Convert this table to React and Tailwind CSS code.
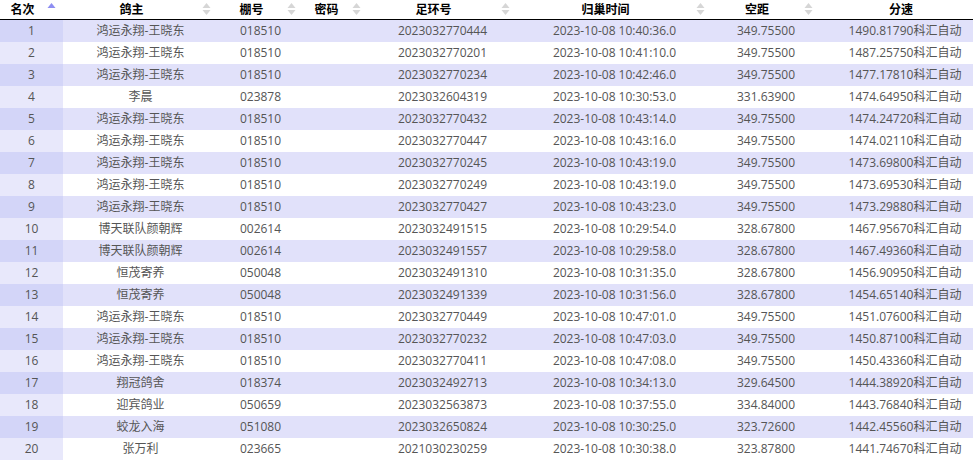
const W = '鸿运永翔-王晓东';
const B = '博天联队颜朝辉';
const H = '恒茂寄养';

const rows = [
  [W, '018510', '2023032770444', '10:40:36.0', '349.75500', '1490.81790'],
  [W, '018510', '2023032770201', '10:41:10.0', '349.75500', '1487.25750'],
  [W, '018510', '2023032770234', '10:42:46.0', '349.75500', '1477.17810'],
  ['李晨', '023878', '2023032604319', '10:30:53.0', '331.63900', '1474.64950'],
  [W, '018510', '2023032770432', '10:43:14.0', '349.75500', '1474.24720'],
  [W, '018510', '2023032770447', '10:43:16.0', '349.75500', '1474.02110'],
  [W, '018510', '2023032770245', '10:43:19.0', '349.75500', '1473.69800'],
  [W, '018510', '2023032770249', '10:43:19.0', '349.75500', '1473.69530'],
  [W, '018510', '2023032770427', '10:43:23.0', '349.75500', '1473.29880'],
  [B, '002614', '2023032491515', '10:29:54.0', '328.67800', '1467.95670'],
  [B, '002614', '2023032491557', '10:29:58.0', '328.67800', '1467.49360'],
  [H, '050048', '2023032491310', '10:31:35.0', '328.67800', '1456.90950'],
  [H, '050048', '2023032491339', '10:31:56.0', '328.67800', '1454.65140'],
  [W, '018510', '2023032770449', '10:47:01.0', '349.75500', '1451.07600'],
  [W, '018510', '2023032770232', '10:47:03.0', '349.75500', '1450.87100'],
  [W, '018510', '2023032770411', '10:47:08.0', '349.75500', '1450.43360'],
  ['翔冠鸽舍', '018374', '2023032492713', '10:34:13.0', '329.64500', '1444.38920'],
  ['迎宾鸽业', '050659', '2023032563873', '10:37:55.0', '334.84000', '1443.76840'],
  ['蛟龙入海', '051080', '2023032650824', '10:30:25.0', '323.72600', '1442.45560'],
  ['张万利', '023665', '2021030230259', '10:30:38.0', '323.87800', '1441.74670'],
];

const cols = [
  { title: '名次', w: 'w-[63px]', sort: 'asc' },
  { title: '鸽主', w: 'w-[155px]', sort: 'none' },
  { title: '棚号', w: 'w-[85px]', sort: 'none' },
  { title: '密码', w: 'w-[65px]', sort: 'none' },
  { title: '足环号', w: 'w-[149px]', sort: 'none' },
  { title: '归巢时间', w: 'w-[195px]', sort: 'none' },
  { title: '空距', w: 'w-[108px]', sort: 'none' },
  { title: '分速', w: 'w-[170px]' },
];

function SortIcon({ state }) {
  const up = state === 'asc' ? '#8e8ef2' : '#d6d6d6';
  const down = state === 'asc' ? 'transparent' : '#d6d6d6';
  return (
    <svg width="9" height="14" viewBox="0 0 9 14" className="absolute right-[7px] top-[2px]">
      <path d="M4.5 1 L8.5 6 L0.5 6 Z" fill={up} />
      <path d="M4.5 13 L8.5 8 L0.5 8 Z" fill={down} />
    </svg>
  );
}

export default function App() {
  return (
    <div
      className="w-[973px] h-[460px] overflow-hidden bg-white text-[12px]"
      style={{ fontFamily: '"Open Sans", "Noto Sans CJK SC", sans-serif' }}
    >
      <div className="w-[990px]">
        <div className="flex h-[20px] border-b border-black bg-white">
          {cols.map((c) => (
            <div key={c.title} className={`relative shrink-0 ${c.w} h-full`}>
              <div
                className={`h-full flex items-center justify-center font-bold text-black leading-none ${
                  c.sort ? 'pr-[18px]' : 'pr-[8px]'
                }`}
              >
                {c.title}
              </div>
              {c.sort && <SortIcon state={c.sort} />}
            </div>
          ))}
        </div>
        {rows.map((r, i) => {
          const odd = i % 2 === 0;
          const cells = [r[0], r[1], '', r[2], `2023-10-08 ${r[3]}`, r[4], `${r[5]}科汇自动`];
          return (
            <div key={i} className={`flex h-[22px] text-[#555] ${odd ? 'bg-[#e1e1fa]' : 'bg-white'}`}>
              <div
                className={`shrink-0 w-[63px] flex items-center justify-center ${
                  odd ? 'bg-[#d3d5f8]' : 'bg-[#e8e8fb]'
                }`}
              >
                {i + 1}
              </div>
              {cells.map((v, j) => (
                <div
                  key={j}
                  className={`shrink-0 ${cols[j + 1].w} flex items-center justify-center whitespace-nowrap`}
                >
                  {v}
                </div>
              ))}
            </div>
          );
        })}
      </div>
    </div>
  );
}
